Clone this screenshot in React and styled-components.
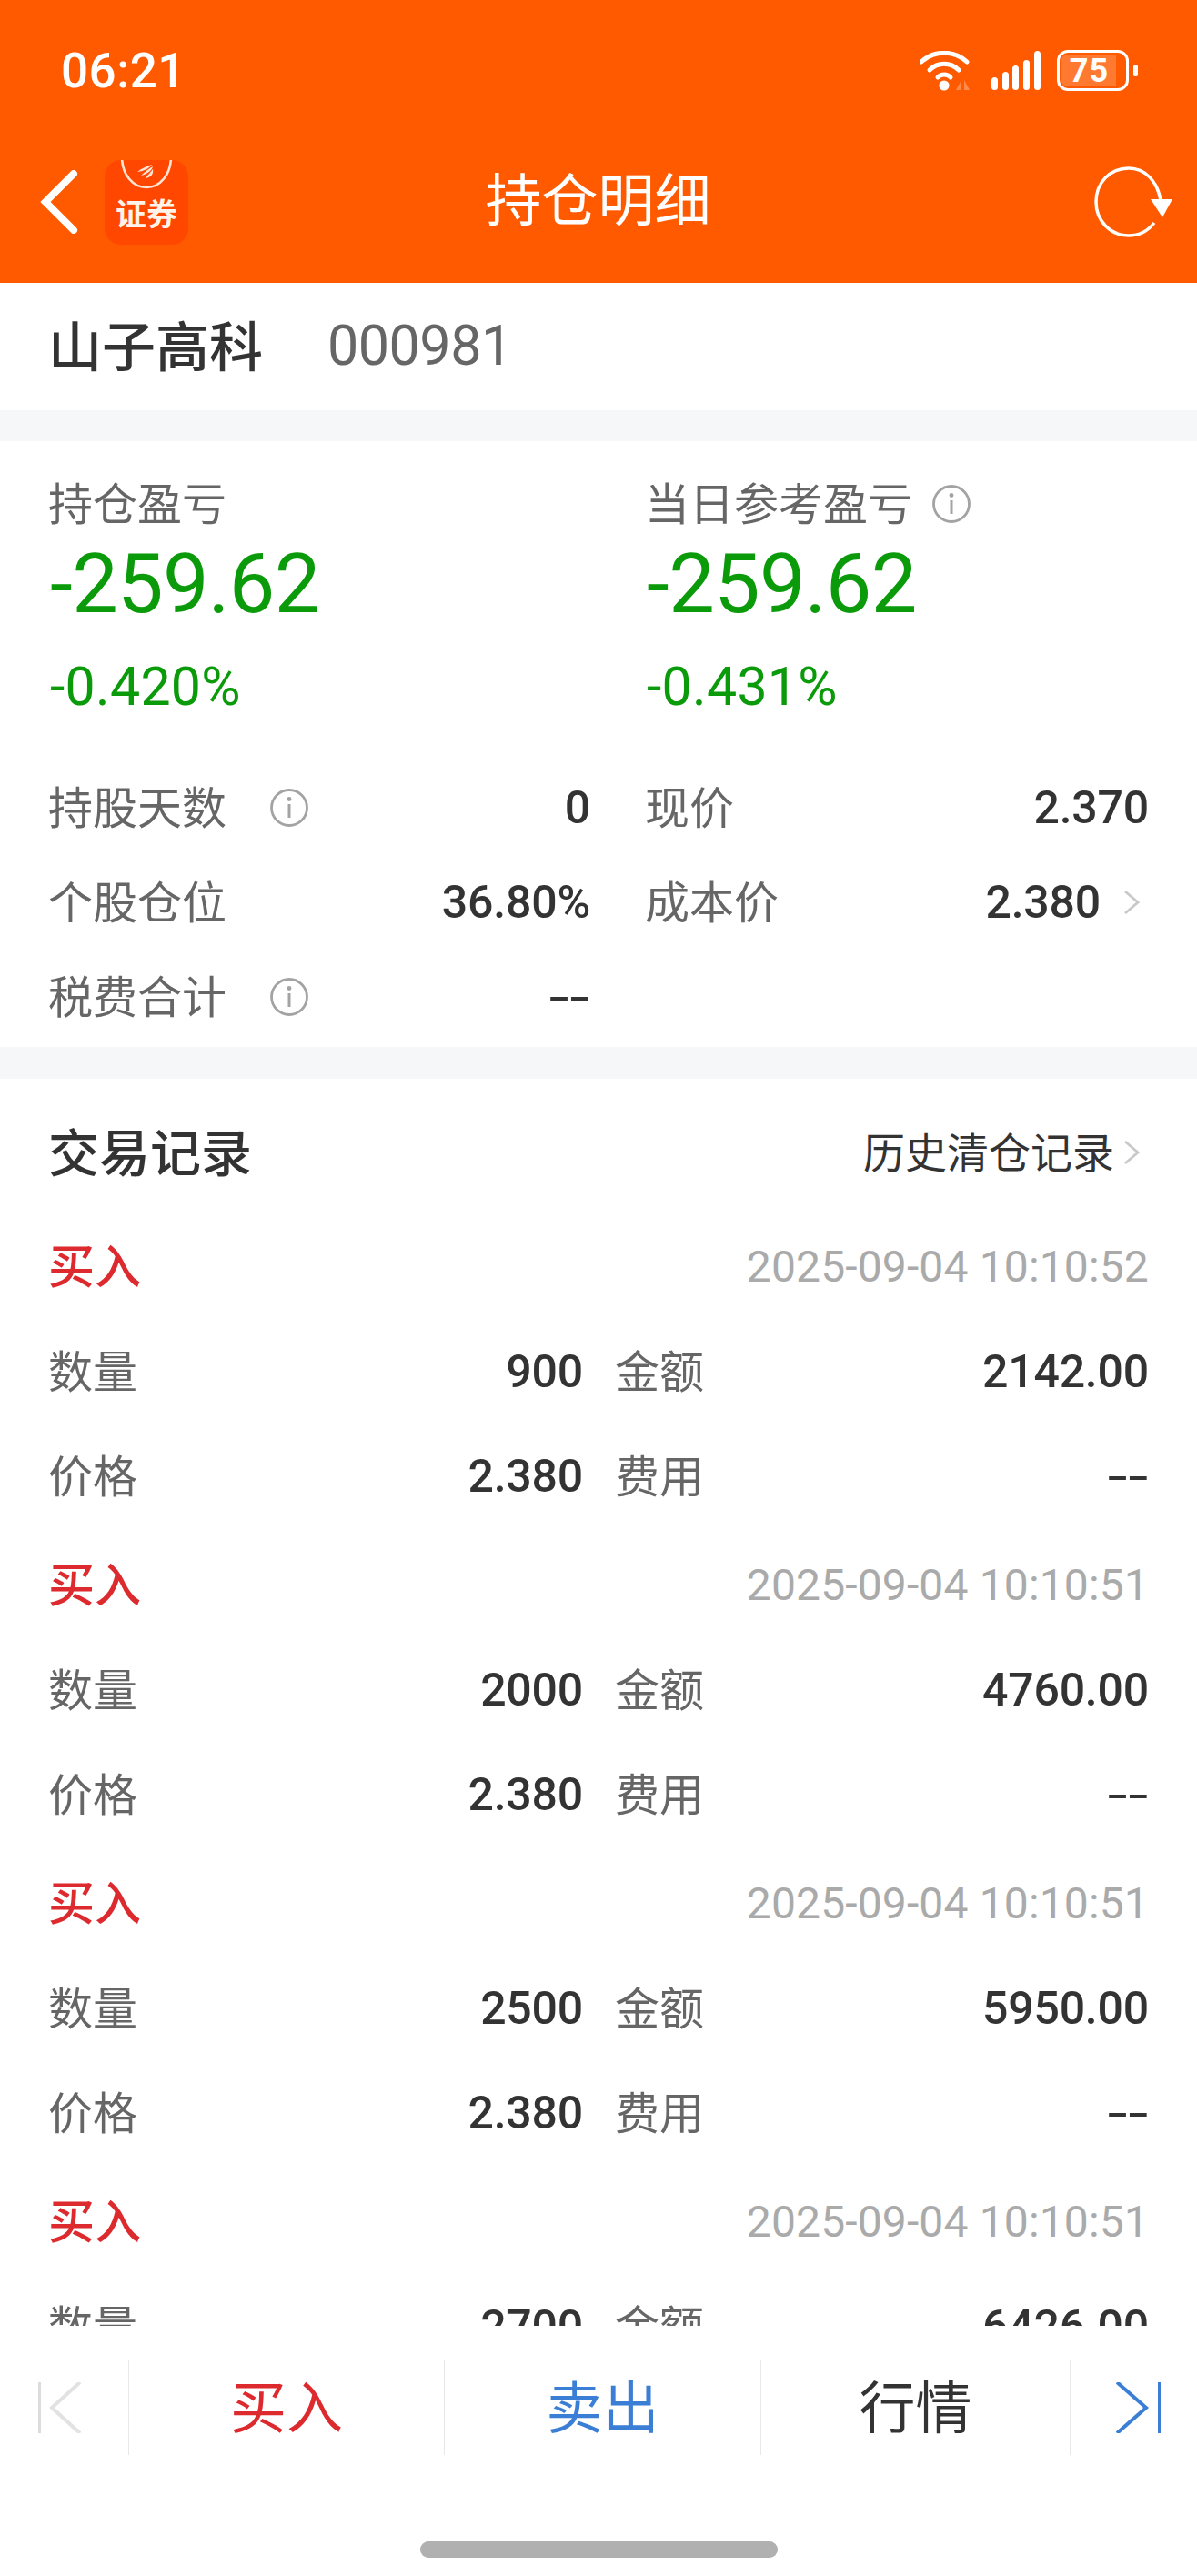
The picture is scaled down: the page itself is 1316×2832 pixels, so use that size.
import React from 'react';
import styled, { createGlobalStyle } from 'styled-components';

const Global = createGlobalStyle`
  html, body { margin: 0; padding: 0; background: #fff; }
  * { box-sizing: border-box; }
  body { font-family: "Roboto", "Noto Sans CJK SC", sans-serif; }
`;

const Page = styled.div`
  width: 1316px;
  height: 2832px;
  display: flex;
  flex-direction: column;
  background: #fff;
  overflow: hidden;
`;

const Header = styled.header`
  height: 311px;
  flex: none;
  background: #ff5a00;
  color: #fff;
`;

const StatusBar = styled.div`
  height: 155px;
  padding: 0 65px 0 67px;
  display: flex;
  align-items: center;
  justify-content: space-between;
`;

const Clock = styled.span`
  font-size: 53px;
  font-weight: 500;
  letter-spacing: 0.5px;
`;

const StatusIcons = styled.div`
  display: flex;
  align-items: center;
`;

const NavBar = styled.div`
  height: 156px;
  padding: 0 27px 22px 44px;
  display: grid;
  grid-template-columns: 1fr auto 1fr;
  align-items: center;
`;

const NavLeft = styled.div`
  display: flex;
  align-items: center;
  gap: 29px;
`;

const NavRight = styled.div`
  display: flex;
  justify-content: flex-end;
`;

const NavTitle = styled.h1`
  margin: 0 0 0 -18px;
  font-size: 62px;
  font-weight: 400;
  line-height: 1;
`;

const Logo = styled.div`
  width: 92px;
  height: 93px;
  border-radius: 18px;
  background: #ff4700;
  overflow: hidden;
  display: flex;
  flex-direction: column;
  align-items: center;
`;

const LogoText = styled.span`
  margin-top: 2px;
  font-size: 34px;
  font-weight: 700;
  line-height: 40px;
  color: #fff3ea;
`;

const StockBar = styled.section`
  height: 140px;
  flex: none;
  padding: 0 53px;
  display: flex;
  align-items: center;
  gap: 71px;
`;

const StockName = styled.span`
  padding-bottom: 7px;
  font-size: 59px;
  font-weight: 500;
  color: #333;
`;

const StockCode = styled.span`
  padding-bottom: 3px;
  font-size: 61px;
  color: #666;
  letter-spacing: -0.5px;
`;

const Gap = styled.div`
  height: ${p => p.$h}px;
  flex: none;
  background: #f6f7f9;
`;

const Summary = styled.section`
  height: 666px;
  flex: none;
  padding: 39px 53px 0;
  display: grid;
  grid-template-columns: 596px 554px;
  column-gap: 60px;
  align-content: start;
`;

const Metric = styled.div`
  display: flex;
  flex-direction: column;
  margin-bottom: 24px;
`;

const LabelText = styled.span`
  padding-bottom: 7px;
`;

const MetricLabel = styled.div`
  height: 60px;
  display: flex;
  align-items: center;
  gap: 22px;
  font-size: 49px;
  color: #666;
`;

const MetricValue = styled.div`
  height: 110px;
  padding: 4px 0 0 2px;
  line-height: 110px;
  font-size: 90px;
  letter-spacing: -0.7px;
  color: #0a9a0a;
`;

const MetricPercent = styled.div`
  height: 118px;
  padding: 2px 0 0 2px;
  line-height: 118px;
  font-size: 59px;
  letter-spacing: 0.3px;
  color: #0a9a0a;
`;

const StatRow = styled.div`
  height: 104px;
  display: flex;
  align-items: center;
  justify-content: space-between;
  font-size: 49px;
`;

const StatLabel = styled.span`
  display: flex;
  align-items: center;
  gap: 48px;
  color: #666;
`;

const StatValue = styled.span`
  display: flex;
  align-items: center;
  gap: 25px;
  color: #333;
  font-size: 50px;
  font-weight: 500;
  letter-spacing: -0.2px;
`;

const Dashes = styled.span`
  font-size: 80px;
  font-weight: 300;
  line-height: 1;
  color: #333;
`;

const Trades = styled.section`
  flex: 1;
  min-height: 0;
  overflow: hidden;
  padding: 31px 53px 0;
`;

const TradesHead = styled.div`
  height: 100px;
  margin-bottom: 18px;
  display: flex;
  align-items: center;
  justify-content: space-between;
`;

const TradesTitle = styled.h2`
  margin: 0;
  padding-bottom: 7px;
  font-size: 56px;
  font-weight: 500;
  color: #333;
`;

const HistoryLink = styled.span`
  display: flex;
  align-items: center;
  gap: 10px;
  font-size: 46px;
  color: #333;
`;

const Trade = styled.article`
  margin-bottom: 5px;
`;

const TradeTop = styled.div`
  height: 115px;
  display: flex;
  align-items: center;
  justify-content: space-between;
`;

const Side = styled.span`
  padding-bottom: 7px;
  font-size: 51px;
  font-weight: 500;
  color: #dd2a2e;
`;

const Stamp = styled.span`
  font-size: 48px;
  letter-spacing: 0.15px;
  color: #aaa;
`;

const TradeGrid = styled.div`
  display: grid;
  grid-template-columns: 588px 1fr;
  column-gap: 35px;
`;

const Cell = styled.div`
  height: 115px;
  display: flex;
  align-items: center;
  justify-content: space-between;
`;

const CellLabel = styled.span`
  padding-bottom: 7px;
  font-size: 49px;
  color: #666;
`;

const CellValue = styled.span`
  font-size: 50px;
  font-weight: 500;
  letter-spacing: -0.2px;
  color: #333;
`;

const Footer = styled.footer`
  height: 275px;
  flex: none;
  padding-top: 37px;
  background: #fff;
  display: flex;
  flex-direction: column;
  align-items: stretch;
`;

const ActionBar = styled.nav`
  height: 105px;
  flex: none;
  display: grid;
  grid-template-columns: 141px 347px 348px 340px 140px;
`;

const Action = styled.div`
  display: flex;
  align-items: center;
  justify-content: ${p => p.$edge || 'center'};
  padding-left: ${p => p.$inset || 0}px;
  border-left: ${p => (p.$first ? 'none' : '1px solid #e8e8e8')};
  font-size: 62px;
  color: ${p => p.$color};
`;

const HomeBar = styled.div`
  align-self: center;
  width: 393px;
  height: 18px;
  margin-top: 95px;
  border-radius: 9px;
  background: #b0b0b0;
`;

const Battery = styled.div`
  position: relative;
  width: 79px;
  height: 45px;
  margin-left: 16px;
  border: 3.5px solid #fff;
  border-radius: 12px;
  display: flex;
  align-items: center;
  justify-content: center;
  overflow: hidden;
  font-size: 36px;
  font-weight: 700;
  letter-spacing: 1px;
`;

const BatteryFill = styled.div`
  position: absolute;
  inset: 2px auto 2px 2px;
  width: 60px;
  border-radius: 6px 0 0 6px;
  background: #ff7a30;
`;

const BatteryLabel = styled.span`
  position: relative;
  margin-right: 8px;
`;

const BatteryCap = styled.div`
  width: 5px;
  height: 13px;
  margin-left: 5px;
  border-radius: 2px;
  background: #fff;
`;

const ChevronMark = styled.svg`
  margin-right: 10px;
`;

const BackIcon = () => (
  <svg width="42" height="70" viewBox="0 0 42 70" fill="none">
    <path d="M37 4 L6 35 L37 66" stroke="#fff" strokeWidth="8" strokeLinecap="round" strokeLinejoin="miter" />
  </svg>
);

const RefreshIcon = () => (
  <svg width="86" height="78" viewBox="0 0 86 78" fill="none">
    <path d="M66 62 C59 71 50 76 38 76 C17 76 2 59 2 39 C2 18 17 2 38 2 C56 2 69 16 73 37" stroke="#fff" strokeWidth="3.5" />
    <path d="M62 36 H86 L75 56 Z" fill="#fff" />
  </svg>
);

const InfoIcon = () => (
  <svg width="42" height="42" viewBox="0 0 42 42" fill="none">
    <circle cx="21" cy="21" r="19.5" stroke="#a3a3a3" strokeWidth="2.8" />
    <circle cx="21" cy="11.5" r="2.4" fill="#a3a3a3" />
    <path d="M21 17 V32" stroke="#a3a3a3" strokeWidth="3" />
  </svg>
);

const Chevron = () => (
  <ChevronMark width="18" height="28" viewBox="0 0 18 28" fill="none">
    <path d="M2 2 L16 14 L2 26" stroke="#c9c9c9" strokeWidth="2.8" />
  </ChevronMark>
);

const WifiIcon = () => (
  <svg width="56" height="44" viewBox="0 0 56 44" fill="none">
    <path d="M2 12 C16 -1 38 -1 52 12" stroke="#fff" strokeWidth="5" strokeLinecap="round" />
    <path d="M11 21 C20 12 34 12 43 21" stroke="#fff" strokeWidth="5" strokeLinecap="round" />
    <path d="M20 29 C24 25 30 25 34 29" stroke="#fff" strokeWidth="5" strokeLinecap="round" />
    <circle cx="27" cy="38" r="5.6" fill="#fff" />
    <path d="M46 32 V43 H40 Z M49 32 V43 H55 Z" fill="#ff8a4c" />
  </svg>
);

const SignalIcon = () => (
  <svg width="56" height="44" viewBox="0 0 56 44" style={{ marginLeft: 23 }} fill="#fff">
    <rect x="0" y="29" width="7" height="14" rx="3.5" />
    <rect x="12" y="23" width="7" height="20" rx="3.5" />
    <rect x="23" y="16" width="7" height="27" rx="3.5" />
    <rect x="35" y="10" width="7" height="33" rx="3.5" />
    <rect x="47" y="0" width="7" height="43" rx="3.5" />
  </svg>
);

// Brand badge: a hanging arc with a small three-feather fan inside it
const LogoMark = () => (
  <svg width="92" height="38" viewBox="0 0 92 38" fill="none">
    <path d="M19 -4 C19 16 31 30 46 30 C61 30 73 16 73 -4" stroke="#ffe5d6" strokeWidth="2.6" />
    <path d="M36 13 C41 9 46 7 52 5 C49 9 44 12 36 13 Z" fill="#ffe5d6" />
    <path d="M40 17 C44 13 48 10 53 7 C52 11 48 15 40 17 Z" fill="#ffe5d6" />
    <path d="M45 20 C48 16 50 14 53 10 C54 14 52 19 45 20 Z" fill="#ffe5d6" />
  </svg>
);

const PrevIcon = () => (
  <svg width="48" height="56" viewBox="0 0 48 56" fill="none">
    <path d="M1.5 0 V56" stroke="#dcdcdc" strokeWidth="3" />
    <path d="M46 0 L15 28 L46 56" stroke="#e2e2e2" strokeWidth="4" />
  </svg>
);

const NextIcon = () => (
  <svg width="49" height="56" viewBox="0 0 49 56" fill="none">
    <path d="M47.5 0 V56" stroke="#3a7fd5" strokeWidth="3" />
    <path d="M1 0 L33 28 L1 56" stroke="#3a7fd5" strokeWidth="4" />
  </svg>
);

const TRADES = [
  { time: '2025-09-04 10:10:52', qty: '900', amount: '2142.00' },
  { time: '2025-09-04 10:10:51', qty: '2000', amount: '4760.00' },
  { time: '2025-09-04 10:10:51', qty: '2500', amount: '5950.00' },
  { time: '2025-09-04 10:10:51', qty: '2700', amount: '6426.00' },
];

export default function App() {
  return (
    <Page>
      <Global />
      <Header>
        <StatusBar>
          <Clock>06:21</Clock>
          <StatusIcons>
            <WifiIcon />
            <SignalIcon />
            <Battery>
              <BatteryFill />
              <BatteryLabel>75</BatteryLabel>
            </Battery>
            <BatteryCap />
          </StatusIcons>
        </StatusBar>
        <NavBar>
          <NavLeft>
            <BackIcon />
            <Logo>
              <LogoMark />
              <LogoText>证券</LogoText>
            </Logo>
          </NavLeft>
          <NavTitle>持仓明细</NavTitle>
          <NavRight>
            <RefreshIcon />
          </NavRight>
        </NavBar>
      </Header>

      <StockBar>
        <StockName>山子高科</StockName>
        <StockCode>000981</StockCode>
      </StockBar>
      <Gap $h={34} />

      <Summary>
        <Metric>
          <MetricLabel><LabelText>持仓盈亏</LabelText></MetricLabel>
          <MetricValue>-259.62</MetricValue>
          <MetricPercent>-0.420%</MetricPercent>
        </Metric>
        <Metric>
          <MetricLabel><LabelText>当日参考盈亏</LabelText><InfoIcon /></MetricLabel>
          <MetricValue>-259.62</MetricValue>
          <MetricPercent>-0.431%</MetricPercent>
        </Metric>
        <StatRow>
          <StatLabel><LabelText>持股天数</LabelText><InfoIcon /></StatLabel>
          <StatValue>0</StatValue>
        </StatRow>
        <StatRow>
          <StatLabel><LabelText>现价</LabelText></StatLabel>
          <StatValue>2.370</StatValue>
        </StatRow>
        <StatRow>
          <StatLabel><LabelText>个股仓位</LabelText></StatLabel>
          <StatValue>36.80%</StatValue>
        </StatRow>
        <StatRow>
          <StatLabel><LabelText>成本价</LabelText></StatLabel>
          <StatValue>2.380<Chevron /></StatValue>
        </StatRow>
        <StatRow>
          <StatLabel><LabelText>税费合计</LabelText><InfoIcon /></StatLabel>
          <Dashes>--</Dashes>
        </StatRow>
      </Summary>
      <Gap $h={35} />

      <Trades>
        <TradesHead>
          <TradesTitle>交易记录</TradesTitle>
          <HistoryLink><LabelText>历史清仓记录</LabelText><Chevron /></HistoryLink>
        </TradesHead>
        {TRADES.map((t, i) => (
          <Trade key={i}>
            <TradeTop>
              <Side>买入</Side>
              <Stamp>{t.time}</Stamp>
            </TradeTop>
            <TradeGrid>
              <Cell><CellLabel>数量</CellLabel><CellValue>{t.qty}</CellValue></Cell>
              <Cell><CellLabel>金额</CellLabel><CellValue>{t.amount}</CellValue></Cell>
              <Cell><CellLabel>价格</CellLabel><CellValue>2.380</CellValue></Cell>
              <Cell><CellLabel>费用</CellLabel><Dashes>--</Dashes></Cell>
            </TradeGrid>
          </Trade>
        ))}
      </Trades>

      <Footer>
        <ActionBar>
          <Action $first $edge="flex-start" $inset={42}><PrevIcon /></Action>
          <Action $color="#dd2a2e"><LabelText>买入</LabelText></Action>
          <Action $color="#3a7fd5"><LabelText>卖出</LabelText></Action>
          <Action $color="#333"><LabelText>行情</LabelText></Action>
          <Action $edge="flex-start" $inset={50}><NextIcon /></Action>
        </ActionBar>
        <HomeBar />
      </Footer>
    </Page>
  );
}
